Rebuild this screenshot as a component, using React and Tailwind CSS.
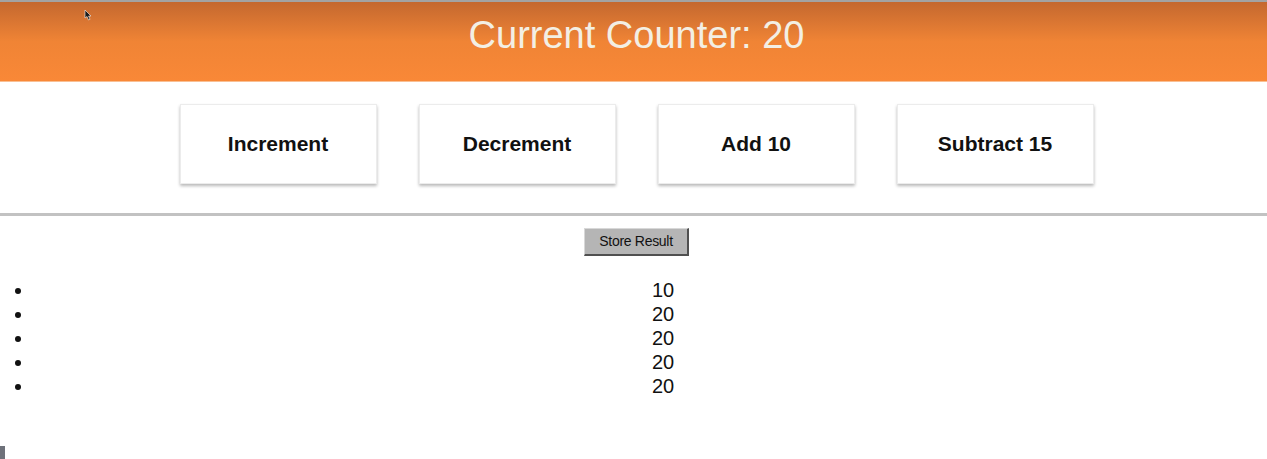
export default function App() {
  const results = [10, 20, 20, 20, 20];
  const buttons = ["Increment", "Decrement", "Add 10", "Subtract 15"];
  return (
    <div className="relative w-full h-[459px] overflow-hidden bg-white" style={{ fontFamily: '"Liberation Sans", Arial, sans-serif' }}>
      <div className="h-[2px] bg-[#a3a3a3]" />
      <div className="h-[80px] pl-[6px] flex items-center justify-center bg-gradient-to-b from-[#c4682f] via-[#f08435] to-[#f98837] border-b border-[#f9bf93]">
        <h1 className="text-[38px] leading-none text-[#f3efe4] font-normal -mt-[14px]">Current Counter: 20</h1>
      </div>
      <div className="pl-[6px] pt-[22px] pb-[29px] flex justify-center gap-[42px]">
        {buttons.map((b) => (
          <div key={b} className="w-[197px] h-[80px] flex items-center justify-center bg-white border border-[#ececec] shadow-[0_2px_3px_rgba(0,0,0,0.28)] text-[21px] font-bold text-[#111]">
            {b}
          </div>
        ))}
      </div>
      <div className="h-[3px] bg-[#c2c2c2]" />
      <div className="pl-[6px] pt-[12px] flex justify-center">
        <button className="w-[105px] h-[28px] bg-[#b5b5b5] border-t border-l border-[#d8d8d8] border-r-2 border-b-2 border-r-[#505050] border-b-[#505050] text-[14px] text-[#111] tracking-[-0.3px]">
          Store Result
        </button>
      </div>
      <ul className="mt-[22px] pl-[34px] list-disc text-[20px] leading-[24px] text-[#111]">
        {results.map((r, i) => (
          <li key={i} className="text-center pl-[25px]">{r}</li>
        ))}
      </ul>
      <div className="mt-[48px] w-[5px] h-[14px] bg-[#6e717a]" />
      <svg className="absolute left-[84px] top-[9px]" width="8" height="12" viewBox="0 0 8 12">
        <path d="M1 1 L1 9 L3 7.5 L4.5 11 L6 10.3 L4.6 7 L7 7 Z" fill="#1a1a1a" stroke="#f3f3f3" strokeWidth="0.6" />
      </svg>
    </div>
  );
}
